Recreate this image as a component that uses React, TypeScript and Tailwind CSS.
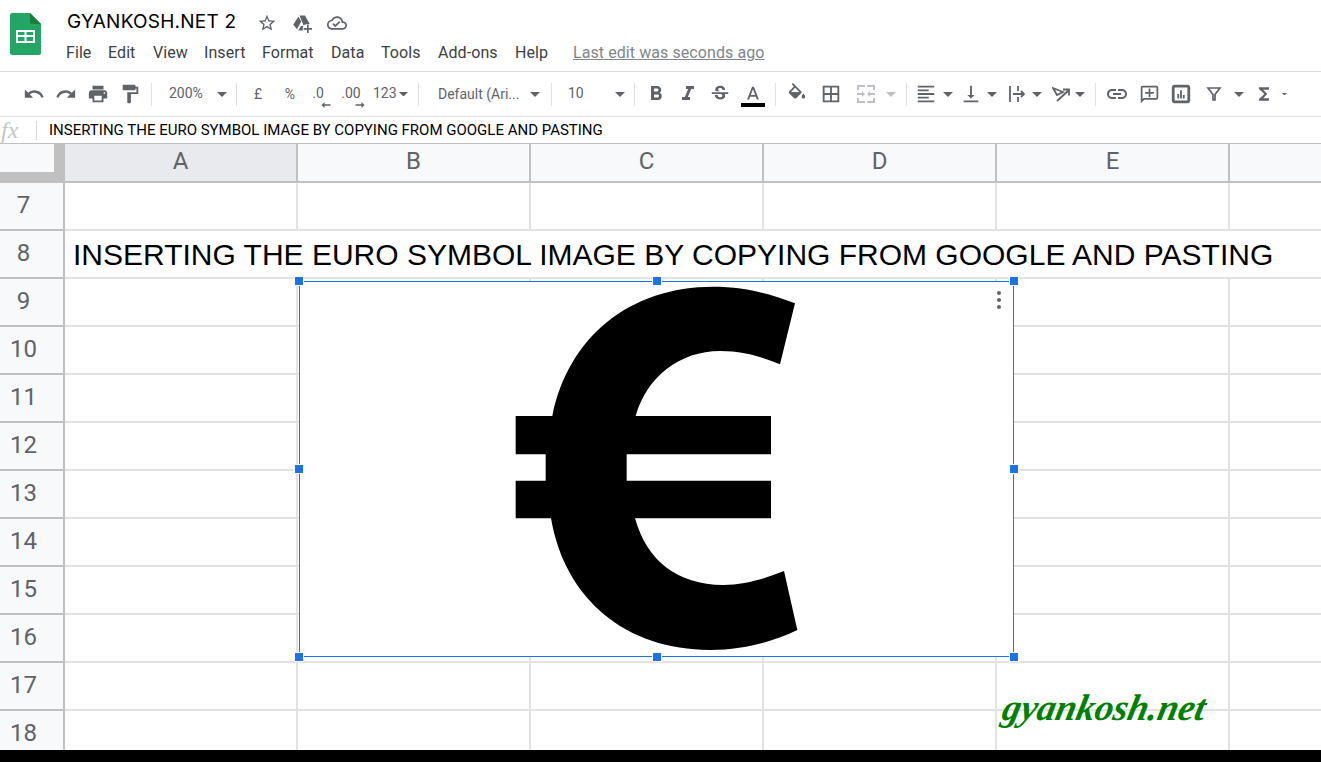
import React from "react";

const G = "#5f6368";

function Ico({ d, size = 24, color = G, cls = "" }: { d: string; size?: number; color?: string; cls?: string }) {
  return (
    <svg width={size} height={size} viewBox="0 0 24 24" fill={color} className={cls}>
      <path d={d} />
    </svg>
  );
}

function Arrow({ w = 10, color = G }: { w?: number; color?: string }) {
  return (
    <svg width={w} height={w / 2} viewBox="0 0 10 5" fill={color}>
      <path d="M0 0h10L5 5z" />
    </svg>
  );
}

function Divider() {
  return <div className="w-px h-[23px] bg-[#e0e0e0] shrink-0" />;
}

function Slot({ cls, children }: { cls: string; children?: React.ReactNode }) {
  return <div className={"h-[32px] flex items-center justify-center shrink-0 " + cls}>{children}</div>;
}

const P = {
  star: "M22 9.24l-7.19-.62L12 2 9.19 8.63 2 9.24l5.46 4.73L5.82 21 12 17.27 18.18 21l-1.63-7.03L22 9.24zM12 15.4l-3.76 2.27 1-4.28-3.32-2.88 4.38-.38L12 6.1l1.71 4.04 4.38.38-3.32 2.88 1 4.28L12 15.4z",
  cloud: "M19.35 10.04C18.67 6.59 15.64 4 12 4 9.11 4 6.6 5.64 5.35 8.04 2.34 8.36 0 10.91 0 14c0 3.31 2.69 6 6 6h13c2.76 0 5-2.24 5-5 0-2.64-2.05-4.78-4.65-4.96zM19 18H6c-2.21 0-4-1.79-4-4 0-2.05 1.53-3.76 3.56-3.97l1.07-.11.5-.95C8.08 7.14 9.94 6 12 6c2.62 0 4.88 1.86 5.39 4.43l.3 1.5 1.53.11c1.56.1 2.78 1.41 2.78 2.96 0 1.65-1.35 3-3 3zm-9-3.82l-2.09-2.09L6.5 13.5 10 17l6.01-6.01-1.41-1.41z",
  undo: "M12.5 8c-2.65 0-5.05.99-6.9 2.6L2 7v9h9l-3.62-3.62c1.39-1.16 3.16-1.88 5.12-1.88 3.54 0 6.55 2.31 7.6 5.5l2.37-.78C21.08 11.03 17.15 8 12.5 8z",
  redo: "M18.4 10.6C16.55 8.99 14.15 8 11.5 8c-4.65 0-8.58 3.03-9.96 7.22L3.9 16c1.05-3.19 4.05-5.5 7.6-5.5 1.95 0 3.73.72 5.12 1.88L13 16h9V7l-3.6 3.6z",
  print: "M19 8H5c-1.66 0-3 1.34-3 3v6h4v4h12v-4h4v-6c0-1.66-1.34-3-3-3zm-3 11H8v-5h8v5zm3-7c-.55 0-1-.45-1-1s.45-1 1-1 1 .45 1 1-.45 1-1 1zm-1-9H6v4h12V3z",
  paint: "M18 4V3c0-.55-.45-1-1-1H5c-.55 0-1 .45-1 1v4c0 .55.45 1 1 1h12c.55 0 1-.45 1-1V6h1v4H9v11c0 .55.45 1 1 1h2c.55 0 1-.45 1-1v-9h8V4h-3z",
  bold: "M15.6 10.79c.97-.67 1.65-1.77 1.65-2.79 0-2.26-1.75-4-4-4H7v14h7.04c2.09 0 3.71-1.7 3.71-3.79 0-1.52-.86-2.82-2.15-3.42zM10 6.5h3c.83 0 1.5.67 1.5 1.5s-.67 1.5-1.5 1.5h-3v-3zm3.5 9H10v-3h3.5c.83 0 1.5.67 1.5 1.5s-.67 1.5-1.5 1.5z",
  italic: "M10 4v3h2.21l-3.42 8H6v3h8v-3h-2.21l3.42-8H18V4z",
  strike: "M6.85 7.08C6.85 4.37 9.45 3 12.24 3c1.64 0 3 .49 3.9 1.28.77.65 1.46 1.73 1.46 3.24h-3.01c0-.31-.05-.59-.15-.85-.29-.86-1.2-1.28-2.25-1.28-1.86 0-2.34 1.02-2.34 1.7 0 .48.25.88.74 1.21.38.25.77.48 1.41.7H7.39c-.21-.34-.54-.89-.54-1.92zM21 12v-2H3v2h9.62c1.15.45 1.96.75 1.96 1.97 0 1-.81 1.67-2.28 1.67-1.54 0-2.93-.54-2.93-2.51H6.4c0 .55.08 1.13.24 1.58.81 2.29 3.29 3.3 5.67 3.3 2.27 0 5.3-.89 5.3-4.05 0-.3-.01-1.16-.48-1.94H21V12z",
  textA: "M11 3L5.5 17h2.25l1.12-3h6.25l1.12 3h2.25L13 3h-2zm-1.38 9L12 5.67 14.38 12H9.62z",
  fill: "M16.56 8.94L7.62 0 6.21 1.41l2.38 2.38-5.15 5.15c-.59.59-.59 1.54 0 2.12l5.5 5.5c.29.29.68.44 1.06.44s.77-.15 1.06-.44l5.5-5.5c.59-.58.59-1.53 0-2.12zM5.21 10L10 5.21 14.79 10H5.21zM19 11.5s-2 2.17-2 3.5c0 1.1.9 2 2 2s2-.9 2-2c0-1.33-2-3.5-2-3.5z",
  borders: "M3 3v18h18V3H3zm8 16H5v-6h6v6zm0-8H5V5h6v6zm8 8h-6v-6h6v6zm0-8h-6V5h6v6z",
  merge: "M3 3h8v2H5v3H3V3zm10 0h8v5h-2V5h-6V3zM3 16h2v3h6v2H3v-5zm16 0h2v5h-8v-2h6v-3zM3 11h5V9l3 3-3 3v-2H3v-2zm18 0v2h-5v2l-3-3 3-3v2h5z",
  align: "M15 15H3v2h12v-2zm0-8H3v2h12V7zM3 13h18v-2H3v2zm0 8h18v-2H3v2zM3 3v2h18V3H3z",
  valign: "M16 13h-3V3h-2v10H8l4 4 4-4zM4 19v2h16v-2H4z",
  link: "M3.9 12c0-1.71 1.39-3.1 3.1-3.1h4V7H7c-2.76 0-5 2.24-5 5s2.24 5 5 5h4v-1.9H7c-1.71 0-3.1-1.39-3.1-3.1zM8 13h8v-2H8v2zm9-6h-4v1.9h4c1.71 0 3.1 1.39 3.1 3.1s-1.39 3.1-3.1 3.1h-4V17h4c2.76 0 5-2.24 5-5s-2.24-5-5-5z",
  comment: "M20 2H4c-1.1 0-2 .9-2 2v18l4-4h14c1.1 0 2-.9 2-2V4c0-1.1-.9-2-2-2zm0 14H5.17L4 17.17V4h16v12zM13 5h-2v4H7v2h4v4h2v-4h4V9h-4z",
  chart: "M19 2H5C3.3 2 2 3.3 2 5v14c0 1.7 1.3 3 3 3h14c1.7 0 3-1.3 3-3V5c0-1.7-1.3-3-3-3zm0 17H5V5h14v14zM8 12h2v5H8zM11 8h2v9h-2zM14 13h2v4h-2z",
  sigma: "M18 4H6v2l6.5 6L6 18v2h12v-3h-7l5-5-5-5h7V4z",
};

function Header() {
  return (
    <div className="h-[72px] border-b border-[#dadce0] flex shrink-0">
      <svg width="31" height="42" viewBox="0 0 31 42" className="ml-[10px] mt-[13px] shrink-0">
        <path d="M2.5 0H20l11 11v28.5a2.5 2.5 0 0 1-2.5 2.5h-26A2.5 2.5 0 0 1 0 39.5v-37A2.5 2.5 0 0 1 2.5 0z" fill="#23a566" />
        <path d="M20 0l11 11H22a2 2 0 0 1-2-2z" fill="#188038" />
        <path d="M6 17h19v13H6zM8 19v3h6.5v-3zm8.5 0v3H23v-3zM8 24v4h6.5v-4zm8.5 0v4H23v-4z" fill="#fff" fillRule="evenodd" />
      </svg>
      <div className="ml-[25px] flex flex-col">
        <div className="h-[24px] mt-[10px] flex items-center">
          <span className="ml-[1px] text-[19px] tracking-[0.24px] leading-[24px] text-[#000] font-['Inter',sans-serif] w-[191px] whitespace-nowrap">GYANKOSH.NET 2</span>
          <Ico d={P.star} size={20} cls="-ml-[1px] mt-[2px]" />
          <svg width="20" height="20" viewBox="0 0 24 24" fill={G} className="ml-[15px] mt-[2px]">
            <path d="M9 3h6.5l6 10.5h-4.6a6 6 0 0 0-3 1.6zM7.7 4.2l3.4 6L6 19.5 1.5 14z" />
            <path d="M7.5 21l3.2-5.5h3a6 6 0 0 0-.7 5.5zM18 14h2v4h4v2h-4v4h-2v-4h-4v-2h4z" />
          </svg>
          <Ico d={P.cloud} size={20} cls="ml-[15px] mt-[2px]" />
        </div>
        <div className="flex items-center h-[20px] mt-[9px] text-[16px] tracking-[0.08px] leading-[20px] text-[#3c4043] font-['Roboto',sans-serif] whitespace-nowrap">
          <span className="w-[42px]">File</span>
          <span className="w-[45px]">Edit</span>
          <span className="w-[51px]">View</span>
          <span className="w-[58px]">Insert</span>
          <span className="w-[69px]">Format</span>
          <span className="w-[50px]">Data</span>
          <span className="w-[57px]">Tools</span>
          <span className="w-[77px]">Add-ons</span>
          <span className="w-[58px]">Help</span>
          <span className="text-[#80868b] underline">Last edit was seconds ago</span>
        </div>
      </div>
    </div>
  );
}

function Toolbar() {
  return (
    <div className="h-[45px] border-b border-[#e0e0e0] flex items-center pl-[18px] shrink-0 font-['Roboto',sans-serif] text-[14px] text-[#5f6368]">
      <Slot cls="w-[32px]"><Ico d={P.undo} size={22} /></Slot>
      <Slot cls="w-[32px]"><Ico d={P.redo} size={22} /></Slot>
      <Slot cls="w-[32px]"><Ico d={P.print} size={22} /></Slot>
      <Slot cls="w-[32px]"><Ico d={P.paint} size={22} /></Slot>
      <div className="w-[5px]" />
      <Divider />
      <Slot cls="w-[84px] !justify-start pl-[17px] gap-[12px]"><span className="w-[36px] -mt-[2px]">200%</span><Arrow /></Slot>
      <Divider />
      <Slot cls="w-[42px]">£</Slot>
      <Slot cls="w-[22px]">%</Slot>
      <Slot cls="w-[38px] relative">
        <span className="-mt-[2px] -ml-[4px]">.0</span>
        <svg width="10" height="6" viewBox="0 0 12 8" fill={G} className="absolute left-[20px] top-[24px]"><path d="M4 0v3h8v2H4v3L0 4z" /></svg>
      </Slot>
      <Slot cls="w-[24px] relative">
        <span className="-mt-[2px]">.00</span>
        <svg width="10" height="6" viewBox="0 0 12 8" fill={G} className="absolute left-[16px] top-[24px]"><path d="M8 0v3H0v2h8v3l4-4z" /></svg>
      </Slot>
      <Slot cls="w-[55px] !justify-start pl-[10px] gap-[2px]"><span className="-mt-[1px]">123</span><Arrow w={9} /></Slot>
      <Divider />
      <Slot cls="w-[132px] !justify-start pl-[19px] gap-[11px]"><span className="w-[81px] whitespace-nowrap">Default (Ari...</span><Arrow /></Slot>
      <Divider />
      <Slot cls="w-[82px] !justify-start pl-[16px] gap-[31px]"><span className="w-[16px] -mt-[2px]">10</span><Arrow /></Slot>
      <Divider />
      <Slot cls="w-[32px] ml-[5px]"><Ico d={P.bold} /></Slot>
      <Slot cls="w-[32px]"><Ico d={P.italic} /></Slot>
      <Slot cls="w-[32px]"><Ico d={P.strike} size={22} /></Slot>
      <div className="w-[32px] ml-[1px] h-[32px] flex flex-col items-center shrink-0">
        <Ico d={P.textA} size={22} cls="mt-[6px] -mb-[3px]" />
        <div className="w-[24px] h-[4px] bg-black shrink-0" />
      </div>
      <div className="w-[6px]" />
      <Divider />
      <Slot cls="w-[32px] ml-[5px]">
        <svg width="22" height="22" viewBox="0 0 24 24" fill={G}>
          <path d={P.fill} />
          <path d="M5 10h10.5l-5.5 5.5z" />
        </svg>
      </Slot>
      <Slot cls="w-[32px] ml-[2px]"><Ico d={P.borders} size={22} /></Slot>
      <Slot cls="w-[32px] ml-[3px]"><Ico d={P.merge} size={24} color="#bdc1c6" /></Slot>
      <Slot cls="w-[24px] !justify-start pl-[4px]"><Arrow color="#bdc1c6" /></Slot>
      <Divider />
      <Slot cls="w-[24px] ml-[7px]"><Ico d={P.align} size={22} /></Slot>
      <Slot cls="w-[20px]"><Arrow /></Slot>
      <Slot cls="w-[24px] ml-[1px]"><Ico d={P.valign} size={22} /></Slot>
      <Slot cls="w-[16px] ml-[1px]"><Arrow /></Slot>
      <Slot cls="w-[24px] ml-[5px]">
        <svg width="16" height="16" viewBox="0 0 16 16" fill="none" stroke={G} strokeWidth="1.8">
          <path d="M1 0v16M9 0v5M9 11v5" />
          <path d="M4 8h11M12 5l3 3-3 3" />
        </svg>
      </Slot>
      <Slot cls="w-[16px]"><Arrow /></Slot>
      <Slot cls="w-[24px] ml-[4px]">
        <svg width="18" height="15" viewBox="0 0 18 15" fill="none" stroke={G} strokeWidth="1.8">
          <path d="M1 1l10 4-6 3z" />
          <path d="M5 14L17 3M11 2.5h6v6" />
        </svg>
      </Slot>
      <Slot cls="w-[16px] -ml-[1px]"><Arrow /></Slot>
      <div className="w-[7px]" />
      <Divider />
      <Slot cls="w-[32px] ml-[5px]"><Ico d={P.link} /></Slot>
      <Slot cls="w-[32px]"><Ico d={P.comment} size={21} /></Slot>
      <Slot cls="w-[32px]"><Ico d={P.chart} size={22} /></Slot>
      <Slot cls="w-[32px] ml-[1px]">
        <svg width="16" height="14" viewBox="0 0 16 14" fill="none" stroke={G} strokeWidth="1.7">
          <path d="M2 1h12L9 7.5V13H7V7.5z" />
        </svg>
      </Slot>
      <Slot cls="w-[18px]"><Arrow /></Slot>
      <Slot cls="w-[32px]"><Ico d={P.sigma} size={20} /></Slot>
      <Slot cls="w-[8px]"><Arrow w={5} /></Slot>
    </div>
  );
}

function FormulaBar() {
  return (
    <div className="h-[26px] flex items-center shrink-0 bg-white">
      <span className="w-[36px] pl-[1px] text-[24px] leading-[24px] italic text-[#c4c7c5] font-['Liberation_Serif',serif]">fx</span>
      <div className="w-px h-[19px] bg-[#dadce0]" />
      <span className="ml-[12px] text-[15px] text-black font-['Roboto',sans-serif] whitespace-nowrap">INSERTING THE EURO SYMBOL IMAGE BY COPYING FROM GOOGLE AND PASTING</span>
    </div>
  );
}

function ColHeader({ label, active }: { label: string; active?: boolean }) {
  return (
    <div className={"w-[233px] shrink-0 h-full flex items-center justify-center border-r-2 border-[#c0c0c0] pb-[3px] " + (active ? "bg-[#e8eaed]" : "bg-[#f8f9fa]")}>
      {label}
    </div>
  );
}

function ColumnHeaders() {
  return (
    <div className="h-[40px] flex shrink-0 border-t border-b-2 border-[#c0c0c0] bg-[#f8f9fa] text-[24px] text-[#5f6368] font-['Roboto',sans-serif]">
      <div className="w-[65px] shrink-0 h-full bg-[#c0c0c0] flex flex-col">
        <div className="w-[54px] h-[28px] bg-[#f8f9fa]" />
      </div>
      <ColHeader label="A" active />
      <ColHeader label="B" />
      <ColHeader label="C" />
      <ColHeader label="D" />
      <ColHeader label="E" />
    </div>
  );
}

function Cell() {
  return <div className="w-[233px] shrink-0 h-full border-r-2 border-[#e2e3e3]" />;
}

function Row({ n, children }: { n: number; children?: React.ReactNode }) {
  return (
    <div className="h-[48px] flex shrink-0 border-b-2 border-[#e2e3e3]">
      <div className="w-[65px] shrink-0 -mb-[2px] h-[48px] bg-[#f8f9fa] border-r-2 border-b-2 border-[#c0c0c0] flex items-center justify-center pr-[16px] pb-[3px] text-[24px] text-[#5f6368] font-['Roboto',sans-serif]">
        {n}
      </div>
      {children ?? (
        <>
          <Cell />
          <Cell />
          <Cell />
          <Cell />
          <Cell />
        </>
      )}
    </div>
  );
}

function Handle({ cls }: { cls: string }) {
  return <div className={"absolute w-[8px] h-[8px] bg-[#1a73e8] border border-white box-content -m-[5px] " + cls} />;
}

function ImageOverlay() {
  return (
    <div className="absolute left-[299px] top-[98px] w-[715px] h-[376px] bg-white border border-[#1a73e8]">
      <svg width="330" height="400" viewBox="0 0 990 1200" className="absolute left-[190px] -top-[12px] blur-[0.4px]">
        <path
          fill="#000"
          d="M915 100C840 70 760 50 670 50C420 50 235 200 187 438L77 438L77 553L167 553L167 632L77 632L77 745L183 745C225 990 410 1140 660 1140C760 1140 850 1115 922 1080L882 903C820 928 760 945 700 945C560 945 470 870 435 745L843 745L843 632L410 632L410 553L843 553L843 438L437 438C470 320 570 243 690 243C760 243 815 260 870 283Z"
        />
      </svg>
      <div className="absolute right-[12px] top-[9px] flex flex-col gap-[3px]">
        <div className="w-[4px] h-[4px] rounded-full bg-[#5f6368]" />
        <div className="w-[4px] h-[4px] rounded-full bg-[#5f6368]" />
        <div className="w-[4px] h-[4px] rounded-full bg-[#5f6368]" />
      </div>
      <Handle cls="left-[-1px] top-[-1px]" />
      <Handle cls="left-[357px] top-[-1px]" />
      <Handle cls="left-[714px] top-[-1px]" />
      <Handle cls="left-[-1px] top-[187px]" />
      <Handle cls="left-[714px] top-[187px]" />
      <Handle cls="left-[-1px] top-[375px]" />
      <Handle cls="left-[357px] top-[375px]" />
      <Handle cls="left-[714px] top-[375px]" />
    </div>
  );
}

export default function App() {
  return (
    <div className="w-[1321px] h-[762px] overflow-hidden flex flex-col bg-white">
      <Header />
      <Toolbar />
      <FormulaBar />
      <ColumnHeaders />
      <div className="relative flex-1 overflow-hidden flex flex-col min-h-0">
        <Row n={7} />
        <Row n={8}>
          <span className="ml-[8px] mt-[2px] text-[30px] leading-[44px] text-black font-['Liberation_Sans',sans-serif] whitespace-nowrap">INSERTING THE EURO SYMBOL IMAGE BY COPYING FROM GOOGLE AND PASTING</span>
        </Row>
        <Row n={9} />
        <Row n={10} />
        <Row n={11} />
        <Row n={12} />
        <Row n={13} />
        <Row n={14} />
        <Row n={15} />
        <Row n={16} />
        <Row n={17} />
        <Row n={18} />
        <ImageOverlay />
        <span className="absolute left-[1003px] top-[503px] text-[37px] leading-[44px] italic font-bold text-[#008000] font-['Liberation_Serif',serif] whitespace-nowrap -skew-x-12">gyankosh.net</span>
      </div>
      <div className="h-[12px] bg-black shrink-0" />
    </div>
  );
}
